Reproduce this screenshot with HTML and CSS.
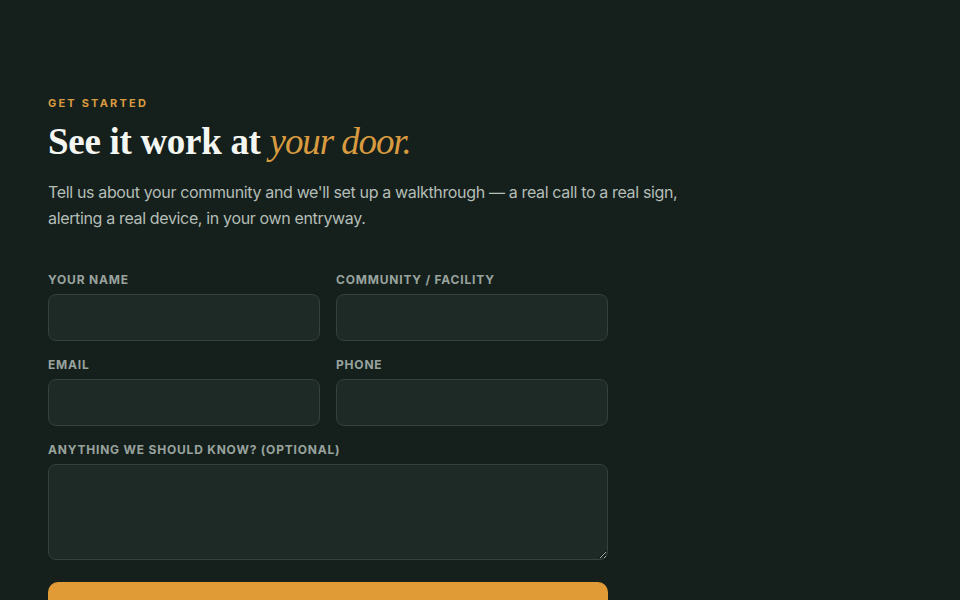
FILE: index.html
```html
<!DOCTYPE html>
<html lang="en">
<head>
<meta charset="utf-8">
<title>Get started</title>
<link rel="stylesheet" href="styles.css">
</head>
<body>
<main class="page">
  <section class="intro">
    <p class="eyebrow">GET STARTED</p>
    <h1 class="title">See it work at <em class="accent">your door.</em></h1>
    <p class="lead">Tell us about your community and we'll set up a walkthrough — a real call to a real sign, alerting a real device, in your own entryway.</p>
  </section>
  <form class="form">
    <div class="row">
      <label class="field">
        <span class="label">Your name</span>
        <input class="input" type="text">
      </label>
      <label class="field">
        <span class="label">Community / Facility</span>
        <input class="input" type="text">
      </label>
    </div>
    <div class="row">
      <label class="field">
        <span class="label">Email</span>
        <input class="input" type="email">
      </label>
      <label class="field">
        <span class="label">Phone</span>
        <input class="input" type="tel">
      </label>
    </div>
    <label class="field">
      <span class="label">Anything we should know? (optional)</span>
      <textarea class="input textarea"></textarea>
    </label>
    <button class="submit" type="button">Request a walkthrough</button>
  </form>
</main>
</body>
</html>
```
FILE: styles.css
```css
* { box-sizing: border-box; }
html, body { margin: 0; padding: 0; }
body {
  background: #15201c;
  color: #e9eee9;
  font-family: "Inter", "Liberation Sans", sans-serif;
  min-height: 600px;
  overflow: hidden;
}
.page {
  padding: 96px 48px 0;
}
.intro { max-width: 660px; }
.eyebrow {
  margin: 0;
  font-size: 11px;
  font-weight: 700;
  letter-spacing: 2.2px;
  color: #d99b3f;
  line-height: 14px;
}
.title {
  margin: 10px 0 0;
  font-family: "Liberation Serif", "DejaVu Serif", serif;
  font-weight: 700;
  font-size: 37px;
  line-height: 44px;
  color: #f4f6f2;
  letter-spacing: -0.3px;
}
.accent {
  font-weight: 400;
  font-style: italic;
  color: #d99b3f;
  letter-spacing: -1.1px;
}
.lead {
  margin: 15px 0 0;
  font-size: 16px;
  line-height: 26px;
  color: #b4bdb7;
  letter-spacing: -0.35px;
}
.form {
  margin-top: 41px;
  width: 560px;
  display: flex;
  flex-direction: column;
  gap: 16px;
}
.row {
  display: grid;
  grid-template-columns: minmax(0, 1fr) minmax(0, 1fr);
  gap: 16px;
}
.field {
  display: flex;
  flex-direction: column;
  gap: 7px;
  min-width: 0;
}
.label {
  padding-top: 1px;
  font-size: 12px;
  font-weight: 700;
  letter-spacing: 0.8px;
  text-transform: uppercase;
  color: #99a39e;
  line-height: 14px;
}
.input {
  width: 100%;
  height: 47px;
  background: #1e2a26;
  border: 1px solid #34423d;
  border-radius: 8px;
  color: #e9eee9;
  font: inherit;
  padding: 0 14px;
}
.textarea {
  height: 96px;
  resize: vertical;
  padding: 12px 14px;
}
.submit {
  margin-top: 6px;
  height: 64px;
  border: 0;
  border-radius: 10px;
  background: #e09b36;
  color: #15201c;
  font: inherit;
  font-weight: 700;
  font-size: 15px;
}
```
